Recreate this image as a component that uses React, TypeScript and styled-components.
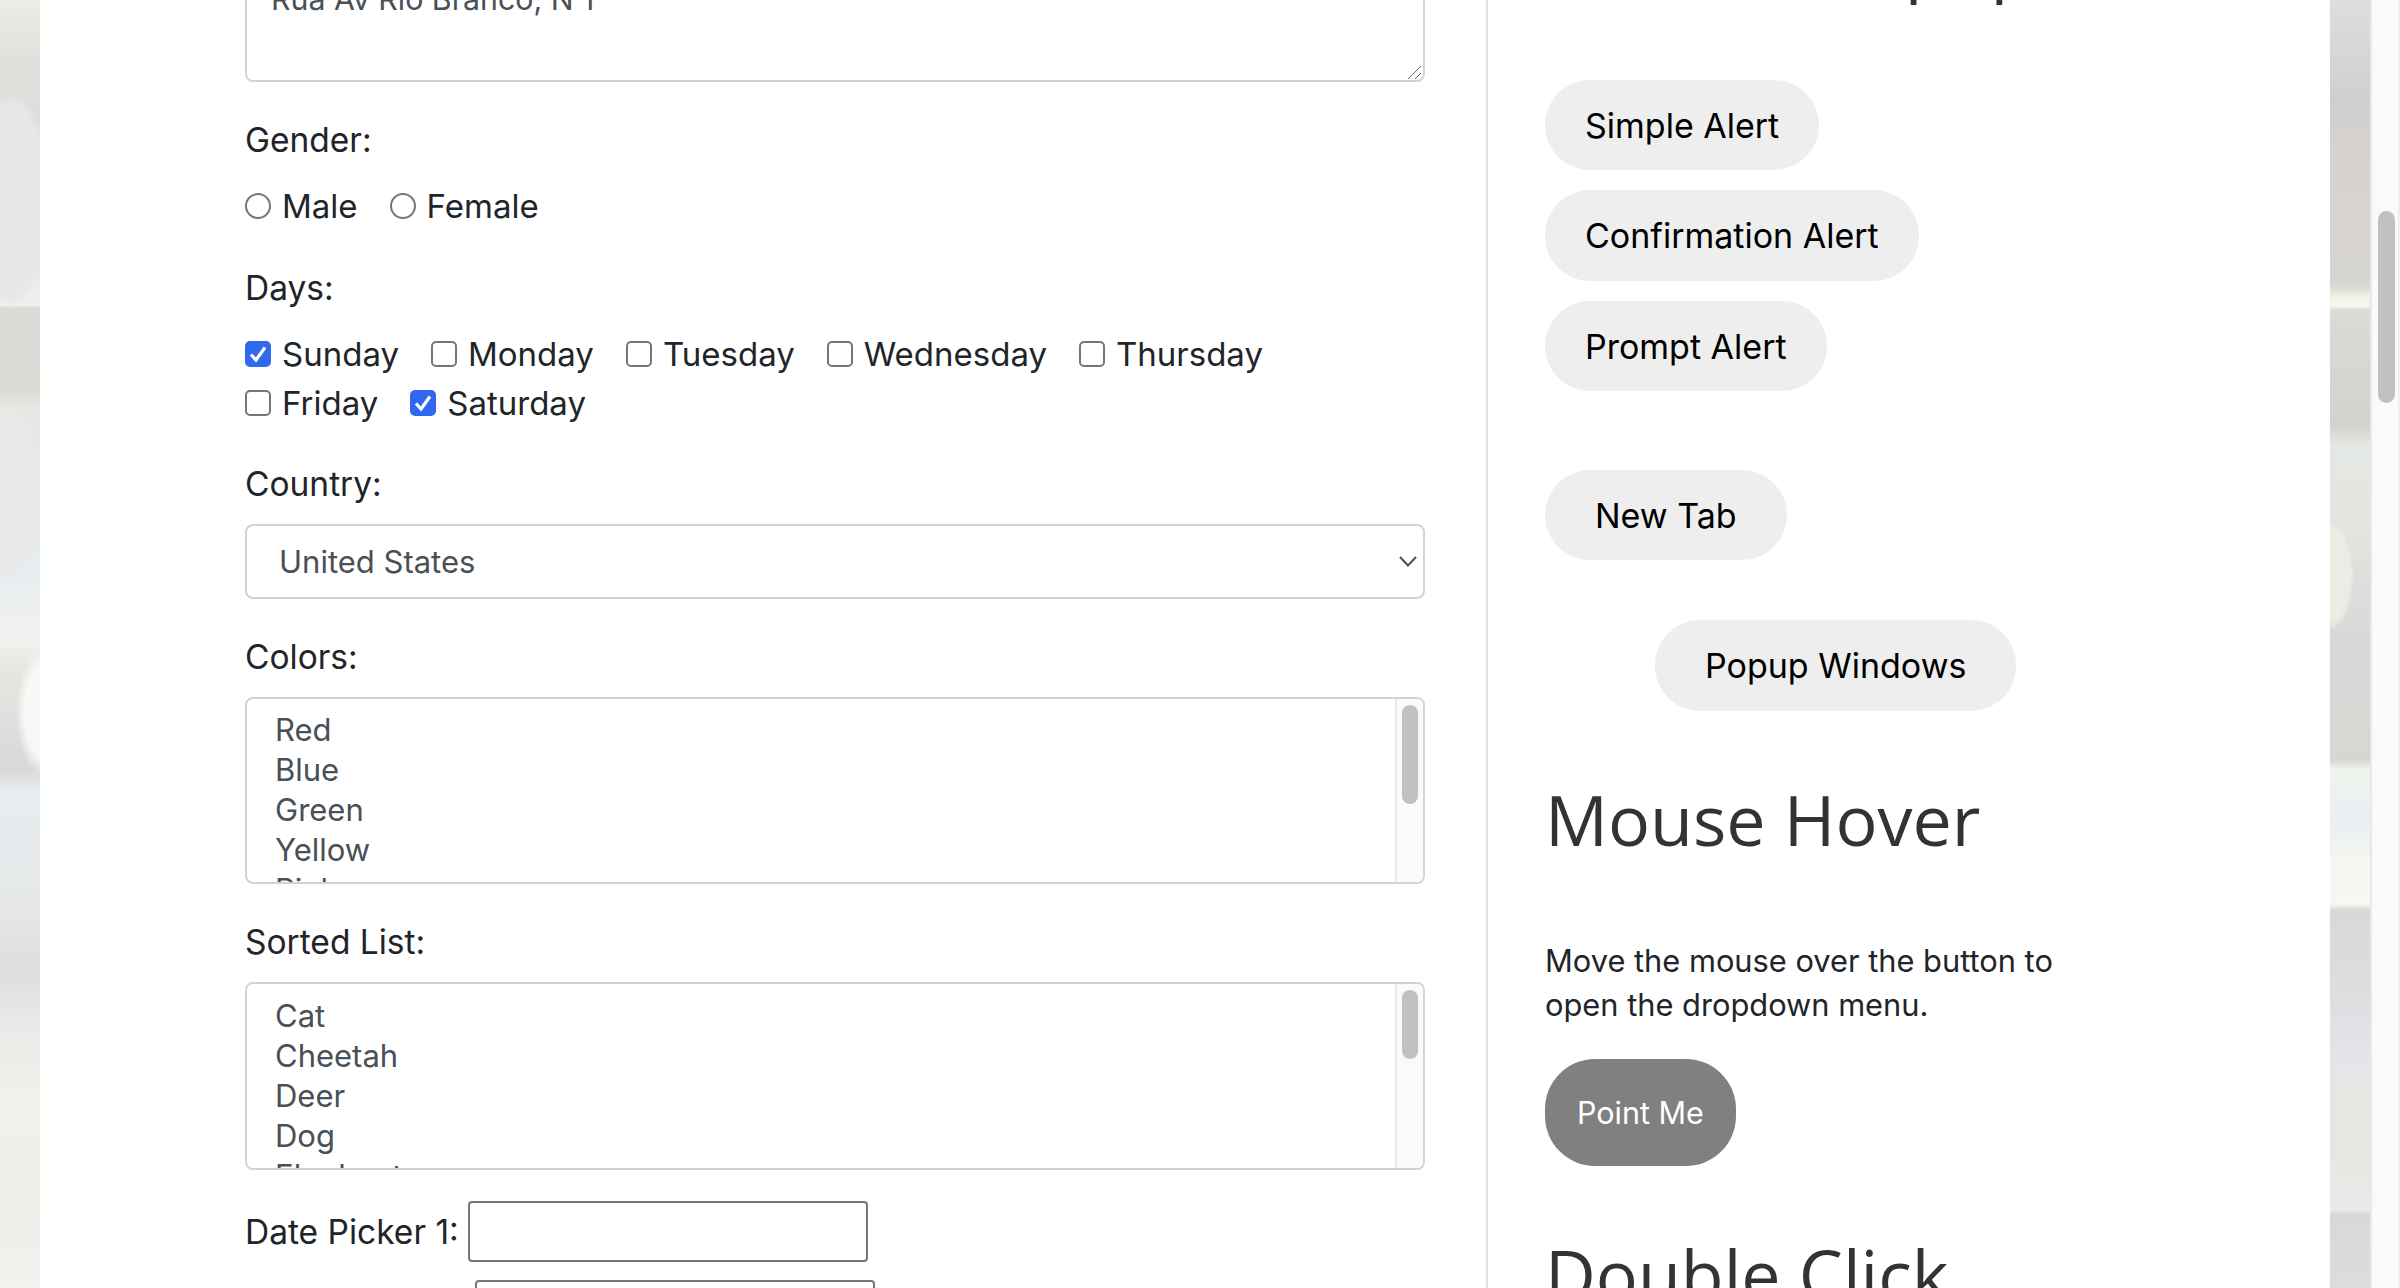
import styled, { createGlobalStyle } from 'styled-components'

const GlobalStyle = createGlobalStyle`
    html, body {
        margin: 0;
        height: 1288px;
        overflow: hidden;
        background: #fff;
    }
    * {
        box-sizing: border-box;
    }
`

const Stage = styled.div`
    display: flex;
    width: 2400px;
    height: 1288px;
    overflow: hidden;
    font-family: Inter, "Liberation Sans", sans-serif;
    font-size: 33.5px;
    color: #212529;
`

const LeftBackdrop = styled.div`
    flex: 0 0 40px;
    background:
        radial-gradient(ellipse 30px 66px at 46px 712px, #f8f8f6 70%, transparent 100%),
        radial-gradient(ellipse 44px 110px at 10px 200px, #e6e8e8 85%, transparent 100%),
        radial-gradient(ellipse 40px 90px at 6px 490px, #e8e9e6 85%, transparent 100%),
        linear-gradient(180deg,
            #ecece6 0, #e0e0dc 60px, #dcdcd9 130px, #e4e6e6 140px, #dedede 255px, #e8ece8 275px, #eef0ec 306px,
            #dadad6 307px, #dadcd6 390px, #e6e8e4 410px, #e6e8e6 500px, #e6ecf0 560px, #f0f2ee 640px,
            #e6e6e2 670px, #d8d8d8 770px, #e6ecf0 790px, #e6e8e8 900px, #dedede 970px, #eaeae8 1030px,
            #f2f0ea 1100px, #eceee8 1200px, #f2f2ee 1288px);
`

const RightBackdrop = styled.div`
    flex: 0 0 40px;
    background:
        radial-gradient(ellipse 24px 55px at 0px 575px, #ecece4 85%, transparent 100%),
        linear-gradient(180deg,
            #dedede 0, #cfcfcf 100px, #d6d2ce 150px, #d8d6d2 285px, #f0f4e8 298px, #f4f8ec 306px,
            #dcdcd6 310px, #d8d8d4 340px, #d4d2ce 425px, #e4e8e4 445px, #e4e4e0 520px, #d8d8d8 640px,
            #d6d6d2 760px, #f0f4ee 770px, #e8eef4 820px, #f6f6f0 860px, #f6f8f4 904px, #d8d8d8 910px,
            #dcdee0 1000px, #e4e6ea 1070px, #e6e6e4 1080px, #e8e6e0 1150px, #eaeaea 1210px,
            #d8d8d8 1214px, #dcdcdc 1288px);
`

const PageScrollbar = styled.div`
    flex: 0 0 30px;
    border-left: 2px solid #e8e8e8;
    border-right: 2px solid #efefef;
    background: #fafafa;
    padding: 211px 0 0 6px;
`

const PageThumb = styled.div`
    width: 17px;
    height: 192px;
    border-radius: 9px;
    background: #c1c1c1;
`

const Panel = styled.main`
    flex: 1;
    display: flex;
    align-items: flex-start;
    background: #fff;
`

const FormColumn = styled.section`
    flex: 0 0 1446px;
    padding: 0 61px 0 205px;
    margin-top: -41px;
`

const SideColumn = styled.aside`
    flex: 1;
    min-height: 1500px;
    border-left: 2px solid #dee2e6;
    padding: 0 0 0 57px;
`

const Field = styled.div`
    margin-bottom: ${p => p.$after ?? 34}px;
`

const FieldLabel = styled.label`
    display: block;
    line-height: 48px;
    margin-bottom: ${p => p.$gap ?? 16}px;
`

const AddressWrap = styled.div`
    position: relative;
    height: 123px;
`

const AddressBox = styled.textarea`
    display: block;
    width: 100%;
    height: 100%;
    padding: 14px 24px;
    border: 2px solid #ced4da;
    border-radius: 8px;
    font: inherit;
    font-size: 30.3px;
    line-height: 48px;
    color: #495057;
    background: #fff;
    resize: none;
`

const ResizeGrip = styled.svg`
    position: absolute;
    right: 3px;
    bottom: 2px;
    width: 15px;
    height: 15px;
    pointer-events: none;
`

const ChoiceRow = styled.div`
    display: flex;
    gap: 32px;
    height: ${p => p.$height}px;
    align-items: center;
    font-size: 33px;
`

const Choice = styled.label`
    display: flex;
    align-items: center;
    gap: 11px;
`

const ChoiceInput = styled.input`
    appearance: none;
    flex: none;
    width: 26px;
    height: 26px;
    margin: 0;
    border: 2px solid #767676;
    border-radius: ${p => (p.type === 'radio' ? '50%' : '5px')};
    background: #fff;

    &:checked {
        border-color: #3069f0;
        background: #3069f0 url("data:image/svg+xml,%3Csvg xmlns='http://www.w3.org/2000/svg' viewBox='0 0 22 22'%3E%3Cpath d='M4 11.5 L9 17 L18 4.5' fill='none' stroke='white' stroke-width='3.2'/%3E%3C/svg%3E") center / 100% no-repeat;
    }
`

const SelectWrap = styled.div`
    position: relative;
    height: 75px;
`

const CountrySelect = styled.select`
    appearance: none;
    display: block;
    width: 100%;
    height: 100%;
    padding: 0 32px;
    border: 2px solid #ced4da;
    border-radius: 8px;
    background: #fff;
    font: inherit;
    font-size: 31px;
    color: #495057;
`

const Chevron = styled.svg`
    position: absolute;
    right: 8px;
    top: 32px;
    width: 18px;
    height: 11px;
    pointer-events: none;
`

const ListBox = styled.div`
    display: flex;
    height: ${p => p.$height}px;
    border: 2px solid #ced4da;
    border-radius: 8px;
    overflow: hidden;
`

const ListBody = styled.div`
    flex: 1;
    padding: ${p => p.$top}px 28px 0;
    font-size: 31px;
    color: #495057;
`

const ListOption = styled.div`
    line-height: 40px;
`

const ListTrack = styled.div`
    flex: 0 0 28px;
    border-left: 2px solid #e8e8e8;
    background: #fafafa;
    padding: 6px 0 0 5px;
`

const ListThumb = styled.div`
    width: 16px;
    height: ${p => p.$height}px;
    border-radius: 8px;
    background: #c1c1c1;
`

const DateRow = styled.div`
    display: flex;
    align-items: center;
    gap: 9px;
    height: 61px;
    margin-bottom: 18px;
`

const DateInput = styled.input`
    width: 400px;
    height: 61px;
    border: 2px solid #767676;
    border-radius: 4px;
    background: #fff;
    font: inherit;
`

const Heading = styled.h2`
    margin: ${p => p.$top}px 0 ${p => p.$bottom}px 0;
    font-family: "Open Sans", sans-serif;
    font-size: 70px;
    font-weight: 400;
    line-height: 84px;
    color: #333;
    white-space: nowrap;
`

const PillStack = styled.div`
    display: flex;
    flex-direction: column;
    align-items: flex-start;
    gap: 20px;
`

const Pill = styled.button`
    display: block;
    height: ${p => p.$height ?? 90}px;
    margin: ${p => p.$margin || '0'};
    padding: 0 ${p => p.$pad}px;
    border: 0;
    border-radius: 45px;
    background: #eee;
    font: inherit;
    font-size: 34px;
    color: #000;
`

const Note = styled.p`
    width: 560px;
    margin: 0 0 32px;
    font-size: 30.8px;
    line-height: 44px;
`

const HoverButton = styled.button`
    display: block;
    height: 107px;
    padding: 0 32px;
    border: 0;
    border-radius: 50px;
    background: #808080;
    font: inherit;
    font-size: 30.5px;
    color: #fff;
`

const days = [
    [
        { name: 'Sunday', on: true },
        { name: 'Monday', on: false },
        { name: 'Tuesday', on: false },
        { name: 'Wednesday', on: false },
        { name: 'Thursday', on: false },
    ],
    [
        { name: 'Friday', on: false },
        { name: 'Saturday', on: true },
    ],
]

const colors = ['Red', 'Blue', 'Green', 'Yellow', 'Pink']
const animals = ['Cat', 'Cheetah', 'Deer', 'Dog', 'Elephant']

const App = () => {
    return (
        <>
            <GlobalStyle />
            <Stage>
                <LeftBackdrop />
                <Panel>
                    <FormColumn>
                        <Field>
                            <AddressWrap>
                                <AddressBox defaultValue="Rua Av Rio Branco, N 1" />
                                <ResizeGrip viewBox="0 0 15 15">
                                    <path d="M1 14 L14 1 M8 14 L14 8" fill="none" stroke="#666" strokeWidth="1" />
                                </ResizeGrip>
                            </AddressWrap>
                        </Field>
                        <Field>
                            <FieldLabel $gap={18}>Gender:</FieldLabel>
                            <ChoiceRow $height={48}>
                                <Choice><ChoiceInput type="radio" name="gender" />Male</Choice>
                                <Choice><ChoiceInput type="radio" name="gender" />Female</Choice>
                            </ChoiceRow>
                        </Field>
                        <Field $after={33}>
                            <FieldLabel $gap={17}>Days:</FieldLabel>
                            {days.map((row, i) => (
                                <ChoiceRow $height={49} key={i}>
                                    {row.map(day => (
                                        <Choice key={day.name}>
                                            <ChoiceInput type="checkbox" defaultChecked={day.on} />
                                            {day.name}
                                        </Choice>
                                    ))}
                                </ChoiceRow>
                            ))}
                        </Field>
                        <Field>
                            <FieldLabel>Country:</FieldLabel>
                            <SelectWrap>
                                <CountrySelect defaultValue="United States">
                                    <option>United States</option>
                                    <option>Canada</option>
                                </CountrySelect>
                                <Chevron viewBox="0 0 18 11">
                                    <polyline points="1,1 9,9.5 17,1" fill="none" stroke="#495057" strokeWidth="2" />
                                </Chevron>
                            </SelectWrap>
                        </Field>
                        <Field>
                            <FieldLabel>Colors:</FieldLabel>
                            <ListBox $height={187}>
                                <ListBody $top={11}>
                                    {colors.map(c => <ListOption key={c}>{c}</ListOption>)}
                                </ListBody>
                                <ListTrack><ListThumb $height={99} /></ListTrack>
                            </ListBox>
                        </Field>
                        <Field $after={31}>
                            <FieldLabel>Sorted List:</FieldLabel>
                            <ListBox $height={188}>
                                <ListBody $top={12}>
                                    {animals.map(a => <ListOption key={a}>{a}</ListOption>)}
                                </ListBody>
                                <ListTrack><ListThumb $height={69} /></ListTrack>
                            </ListBox>
                        </Field>
                        <DateRow>
                            <span>Date Picker 1:</span>
                            <DateInput type="text" />
                        </DateRow>
                        <DateRow>
                            <span>Date Picker 2:</span>
                            <DateInput type="text" />
                        </DateRow>
                    </FormColumn>
                    <SideColumn>
                        <Heading $top={-81} $bottom={77}>Alerts &amp; Popups</Heading>
                        <PillStack>
                            <Pill $pad={40}>Simple Alert</Pill>
                            <Pill $pad={40} $height={91}>Confirmation Alert</Pill>
                            <Pill $pad={40}>Prompt Alert</Pill>
                        </PillStack>
                        <Pill $pad={50} $margin="79px 0 60px">New Tab</Pill>
                        <Pill $pad={50} $height={91} $margin="0 0 0 110px">Popup Windows</Pill>
                        <Heading $top={66} $bottom={78}>Mouse Hover</Heading>
                        <Note>Move the mouse over the button to open the dropdown menu.</Note>
                        <HoverButton>Point Me</HoverButton>
                        <Heading $top={66} $bottom={0}>Double Click</Heading>
                    </SideColumn>
                </Panel>
                <RightBackdrop />
                <PageScrollbar><PageThumb /></PageScrollbar>
            </Stage>
        </>
    )
}

export default App
